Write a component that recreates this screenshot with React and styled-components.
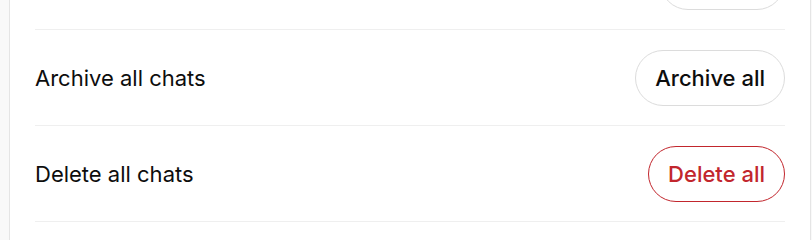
import React from "react";
import styled, { createGlobalStyle } from "styled-components";

const GlobalStyle = createGlobalStyle`
  html, body {
    margin: 0;
    padding: 0;
    background: #f9f9f9;
    font-family: Inter, "Liberation Sans", sans-serif;
    -webkit-font-smoothing: antialiased;
  }
`;

const Shell = styled.div`
  height: 240px;
  overflow: hidden;
  padding-left: 9px;
  padding-right: 1px;
  display: flex;
`;

const Panel = styled.section`
  flex: 1;
  background: #ffffff;
  border-left: 1px solid #e5e5e5;
  border-right: 1px solid #e5e5e5;
  padding: 0 25px;
`;

const List = styled.div`
  margin-top: -66px;
  display: flex;
  flex-direction: column;
`;

const Row = styled.div`
  height: 95px;
  display: flex;
  align-items: center;
  justify-content: space-between;
  border-bottom: 1px solid #efefef;
`;

const Label = styled.span`
  font-size: 22px;
  color: #0d0d0d;
`;

const PillButton = styled.button`
  height: 56px;
  padding: 0 19px;
  border-radius: 28px;
  background: #ffffff;
  font-family: inherit;
  font-size: 22px;
  font-weight: 500;
  cursor: pointer;
  border: 1px solid ${(p) => (p.$danger ? "#c2262d" : "#dcdcdc")};
  color: ${(p) => (p.$danger ? "#c2262d" : "#0d0d0d")};
`;

const rows = [
  { label: "Archived chats", action: "Manage" },
  { label: "Archive all chats", action: "Archive all" },
  { label: "Delete all chats", action: "Delete all", danger: true },
];

export default function App() {
  return (
    <>
      <GlobalStyle />
      <Shell>
        <Panel>
          <List>
            {rows.map((r) => (
              <Row key={r.label}>
                <Label>{r.label}</Label>
                <PillButton $danger={r.danger}>{r.action}</PillButton>
              </Row>
            ))}
          </List>
        </Panel>
      </Shell>
    </>
  );
}
